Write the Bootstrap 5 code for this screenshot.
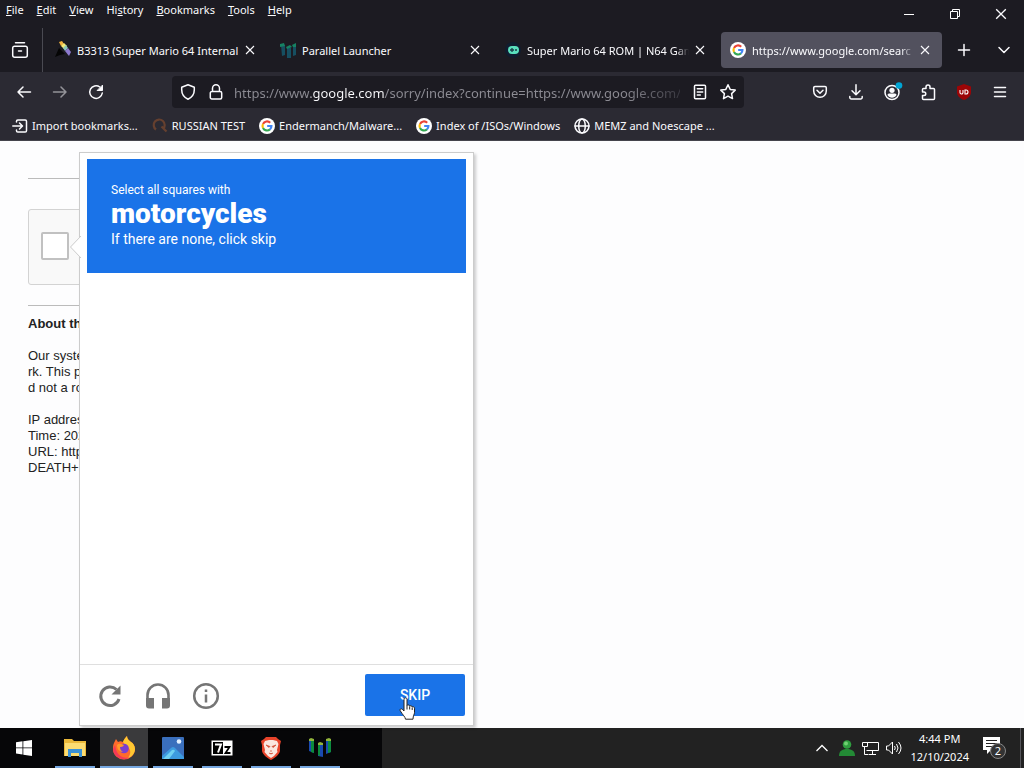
<!DOCTYPE html>
<html lang="en">
<head>
<meta charset="utf-8">
<meta name="viewport" content="width=device-width, initial-scale=1">
<title>https://www.google.com/search</title>
<link href="https://cdn.jsdelivr.net/npm/bootstrap@5.3.0/dist/css/bootstrap.min.css" rel="stylesheet">
<style>
  body { font-family: "Noto Sans", "Open Sans", sans-serif; font-size: 11px; line-height: 16px; background: #fdfdfe; }
  button, input { font: inherit; color: inherit; }
  .plain { background: none; border: 0; padding: 0; color: inherit; display: flex; align-items: center; justify-content: center; }
  svg { display: block; flex: none; overflow: visible; }
  .ln { fill: none; stroke: currentColor; stroke-width: 1.5; stroke-linecap: round; stroke-linejoin: round; }
  .chrome { background: #1c1b22; color: #fbfbfe; }
  .menus { padding: 2px 0 0 6px; gap: 13px; height: 28px; }
  .menus .plain { height: 16px; }
  .winbtn { width: 46px; height: 28px; }
  .tabstrip { height: 44px; padding-right: 2px; }
  .history-btn { width: 43px; border-right: 1px solid #4a4a52 !important; padding-right: 3px; }
  .tabs { gap: 4px; margin-left: 3px; }
  .tab-item { flex: 1 1 0; min-width: 0; max-width: 221px; height: 36px; border-radius: 4px; padding: 0 12px 0 9px; gap: 6px; }
  .tab-item.current { background: #52515e; }
  .tab-name { flex: 1 1 0; min-width: 0; padding-top: 2px; white-space: nowrap; }
  .fade-end { -webkit-mask-image: linear-gradient(90deg, #000 92%, transparent); mask-image: linear-gradient(90deg, #000 92%, transparent); }
  .tools { background: #2b2a33; color: #fbfbfe; }
  .toolrow { height: 40px; padding: 0 6px; }
  .tool { width: 36px; height: 36px; }
  .urlbar { height: 32px; margin: 0 58px; background: #1c1b22; border-radius: 4px; padding: 0 8px; gap: 12px; }
  .url { flex: 1; min-width: 0; border: 0; outline: 0; padding: 2px 0 0; margin-left: -2px; font-size: 13px; height: 24px; color: transparent;
    background: linear-gradient(90deg, #8d8c94 0 77px, #fbfbfe 77px 150px, #8d8c94 150px 390px, #35343c 448px);
    -webkit-background-clip: text; background-clip: text; }
  .marks { height: 29px; padding: 0 12px; gap: 14px; border-bottom: 1px solid #45444c; }
  .marks a { color: inherit; text-decoration: none; gap: 4px; white-space: nowrap; }
  .site { font: 13px/16px "Liberation Sans", Arial, sans-serif; color: #222; }
  .notice { padding: 37px 0 0 28px; width: 428px; }
  .notice hr { margin: 0; border-color: #bbb; opacity: 1; }
  .anchor-box { width: 304px; height: 76px; margin: 30px 0 20px; border: 1px solid #d3d3d3; border-radius: 3px; background: #f9f9f9; padding: 0 0 2px 12px; }
  .anchor-box input { appearance: none; width: 28px; height: 28px; margin: 0; border: 2px solid #c1c1c1; border-radius: 2px; background: #fff; }
  .notice p { margin: 0 0 16px; white-space: nowrap; }
  .notice .about { margin-top: 10px; }
  .challenge { position: absolute; left: 79px; top: 11px; bottom: 2px; width: 395px; background: #fff; border: 1px solid #ccc; box-shadow: 2px 2px 3px rgba(0,0,0,.2); font-family: Roboto, sans-serif; }
  .pointer { position: absolute; left: -10px; top: 83px; }
  .prompt { margin: 6px 7px 0; height: 114px; padding: 23px 24px; background: #1a73e8; color: #fff; }
  .prompt .sm { font-size: 12px; line-height: 16px; }
  .prompt .md { font-size: 14px; line-height: 18px; }
  .prompt h1 { font-size: 28px; line-height: 32px; font-weight: 900; margin: 0; }
  .foot { border-top: 1px solid #dfdfdf; padding: 9px 8px 9px 15px; color: #757575; height: 61px; }
  .foot .ico { width: 30px; height: 42px; margin-right: 18px; padding-top: 2px; }
  .skip { width: 100px; height: 42px; border-radius: 2px; background: #1a73e8; color: #fff; border: 0; font-size: 14px; font-weight: 500; }
  .hand { position: absolute; left: 34px; top: 23px; }
  .taskbar { height: 40px; background: #222; color: #fff; }
  .pinned { background: #060608; width: 382px; gap: 1px; }
  .start { width: 50px; padding-right: 2px; }
  .app { width: 48px; position: relative; }
  .app::after { content: ""; position: absolute; left: 4px; right: 4px; bottom: 0; height: 2px; background: #76a7e0; }
  .app.active { background: #3a3a3c; }
  .app.active::after { left: 0; right: 0; }
  .tray { gap: 7px; padding-right: 3px; }
  .clock { line-height: 18px; text-align: center; margin: 0 7px 0 1px; }
  .peek { width: 1px; background: #55555a; height: 40px; margin-left: 6px; }
</style>
</head>
<body class="d-flex flex-column min-vh-100">
<svg width="0" height="0" class="position-absolute">
  <symbol id="g" viewBox="0 0 18 18">
    <circle cx="9" cy="9" r="9" fill="#fff"/>
    <path fill="none" stroke="#ea4335" stroke-width="2.4" d="M4.5 6.8A5 5 0 0 1 12.6 5.3"/>
    <path fill="none" stroke="#fbbc05" stroke-width="2.4" d="M4.5 6.8A5 5 0 0 0 4.5 11.2"/>
    <path fill="none" stroke="#34a853" stroke-width="2.4" d="M4.5 11.2A5 5 0 0 0 12.3 12.8"/>
    <path fill="none" stroke="#4285f4" stroke-width="2.4" d="M12.3 12.8A5 5 0 0 0 14 9H9.2"/>
  </symbol>
  <symbol id="x" viewBox="0 0 10 10"><path d="M1 1l8 8M9 1L1 9" fill="none" stroke="currentColor" stroke-width="1.1"/></symbol>
  <symbol id="pillars" viewBox="0 0 24 22">
    <path fill="#1a49b0" d="M1 3h5v13l-5-2zM10 7h5v13l-5-1zM18 3h5v12l-5 2z"/>
    <path fill="#0c8a3e" d="M3 4h3v12l-3-1zM10 7h2v12l-2-1zM20 4h3v11l-3 1z"/>
    <path fill="#93b53b" d="M1 2l2-1 3 1v2H1zM10 6l2-1 3 1v2h-5zM18 2l3-1 2 1v2h-5z"/>
  </symbol>
</svg>

<header class="chrome">
  <div class="d-flex justify-content-between">
    <nav class="menus d-flex" aria-label="Menu bar">
      <button class="plain"><span><u>F</u>ile</span></button>
      <button class="plain"><span><u>E</u>dit</span></button>
      <button class="plain"><span><u>V</u>iew</span></button>
      <button class="plain"><span>Hi<u>s</u>tory</span></button>
      <button class="plain"><span><u>B</u>ookmarks</span></button>
      <button class="plain"><span><u>T</u>ools</span></button>
      <button class="plain"><span><u>H</u>elp</span></button>
    </nav>
    <div class="d-flex">
      <button class="plain winbtn" aria-label="Minimize"><svg width="10" height="10"><path d="M0 5.500h10" stroke="#fff"/></svg></button>
      <button class="plain winbtn" aria-label="Restore"><svg width="10" height="10" fill="none" stroke="#fff"><path d="M.5 2.500h7v7h-7zM2.500 2.500v-2h7v7h-2"/></svg></button>
      <button class="plain winbtn" aria-label="Close"><svg width="12" height="12"><use href="#x"/></svg></button>
    </div>
  </div>
  <div class="tabstrip d-flex align-items-center">
    <button class="plain history-btn h-100" aria-label="View recent browsing">
      <svg class="ln" width="16" height="16"><path d="M3.500 .8h9M2.500 4.300h11a1.800 1.800 0 0 1 1.800 1.800v7.100a2 2 0 0 1-2 2H2.700a2 2 0 0 1-2-2V6.100a1.800 1.800 0 0 1 1.800-1.800zM6.500 9h3"/></svg>
    </button>
    <div class="tabs d-flex flex-grow-1" role="tablist">
      <div class="tab-item d-flex align-items-center" role="tab">
        <svg width="16" height="16"><path d="M0 15L4 6l6 6-5 1z" fill="#050505"/><path d="M4 0l3-1 2 3-3 2z" fill="#f3b33d"/><path d="M6 4l3-3 3 3-3 3z" fill="#f4ea77"/><path d="M8 6l3-3 2 3-3 3z" fill="#8cc8b8"/><path d="M10 9l3-3 3 4-2 4z" fill="#8d7ad0"/></svg>
        <span class="tab-name">B3313 (Super Mario 64 Internal</span>
        <button class="plain" aria-label="Close tab"><svg width="10" height="10"><use href="#x"/></svg></button>
      </div>
      <div class="tab-item d-flex align-items-center" role="tab">
        <svg width="16" height="15"><path fill="#164f61" d="M1 2h4v10l-3 1zM7 5h4v10H7zM13 3h3v9l-3 1z"/><path fill="#168263" d="M0 1l4-1 1 3-5 1zM6 4l4-2 2 2-5 2zM12 2l4-2v4h-3z"/></svg>
        <span class="tab-name">Parallel Launcher</span>
        <button class="plain" aria-label="Close tab"><svg width="10" height="10"><use href="#x"/></svg></button>
      </div>
      <div class="tab-item d-flex align-items-center" role="tab">
        <svg width="16" height="16"><circle cx="8" cy="8" r="8" fill="#111d30"/><rect x="3" y="4" width="11" height="8" rx="4" fill="#5ae0bd"/><path d="M5 8h4M7 6v4" stroke="#183c4a" stroke-width="1.300"/><circle cx="11" cy="8" r="1" fill="#183c4a"/></svg>
        <span class="tab-name fade-end">Super Mario 64 ROM | N64 Gam</span>
        <button class="plain" aria-label="Close tab"><svg width="10" height="10"><use href="#x"/></svg></button>
      </div>
      <div class="tab-item current d-flex align-items-center" role="tab" aria-selected="true">
        <svg width="16" height="16"><use href="#g"/></svg>
        <span class="tab-name fade-end">https://www.google.com/searc</span>
        <button class="plain" aria-label="Close tab"><svg width="10" height="10"><use href="#x"/></svg></button>
      </div>
    </div>
    <button class="plain tool ms-1" aria-label="New tab"><svg class="ln" width="12" height="12"><path d="M6 .5v11M.5 6h11"/></svg></button>
    <button class="plain tool ms-1" aria-label="List all tabs"><svg class="ln" width="12" height="8"><path d="M1 1.500l5 5 5-5"/></svg></button>
  </div>
</header>

<section class="tools">
  <div class="toolrow d-flex align-items-center">
    <button class="plain tool" aria-label="Back"><svg class="ln" width="14" height="12"><path d="M13.500 6H1M6 1L1 6l5 5"/></svg></button>
    <button class="plain tool opacity-50" aria-label="Forward"><svg class="ln" width="14" height="12"><path d="M.5 6H13M8 1l5 5-5 5"/></svg></button>
    <button class="plain tool" aria-label="Reload"><svg class="ln" width="14" height="14"><path d="M10.800 2A6.300 6.300 0 1 0 13.300 8"/><path d="M13.500 .5v5h-5z" fill="currentColor" stroke-width="1"/></svg></button>
    <div class="urlbar d-flex align-items-center flex-grow-1">
      <svg class="ln" width="16" height="16"><path d="M8 .8l6.300 2.400v2.600c0 4-2 7.400-6.300 9.400C3.700 13.200 1.700 9.800 1.700 5.800V3.200z"/></svg>
      <svg class="ln" width="16" height="16"><path d="M3.800 7.500h8.400a1.500 1.500 0 0 1 1.500 1.500v4.500a1.500 1.500 0 0 1-1.500 1.500H3.800a1.500 1.500 0 0 1-1.500-1.500V9a1.500 1.500 0 0 1 1.500-1.500zM4.500 7.500V4.200a3.500 3.500 0 0 1 7 0v3.300"/></svg>
      <input class="url" type="text" aria-label="Address" value="https://www.google.com/sorry/index?continue=https://www.google.com/">
      <button class="plain" aria-label="Reader view"><svg class="ln" width="16" height="16"><path d="M3.500 1.300h9a1 1 0 0 1 1 1v11.400a1 1 0 0 1-1 1h-9a1 1 0 0 1-1-1V2.300a1 1 0 0 1 1-1zM5.300 4.800h5.400M5.300 8h5.400M5.300 11h3"/></svg></button>
      <button class="plain" aria-label="Bookmark this page"><svg class="ln" width="16" height="16"><path d="M8 .8l2.200 4.600 5 .7-3.600 3.500.9 5L8 12.200l-4.500 2.400.9-5L.8 6.100l5-.7z"/></svg></button>
    </div>
    <button class="plain tool" aria-label="Save to Pocket"><svg class="ln" width="14" height="14"><path d="M2 1.500h10a1.300 1.300 0 0 1 1.300 1.300V6a6.300 6.300 0 0 1-12.600 0V2.800A1.300 1.300 0 0 1 2 1.500zM4 5.300l3 3 3-3"/></svg></button>
    <button class="plain tool" aria-label="Downloads"><svg class="ln" width="14" height="16"><path d="M7 .8v9.700M3 6.800l4 4 4-4M.8 12.500v1a1.500 1.500 0 0 0 1.500 1.500h9.400a1.500 1.500 0 0 0 1.500-1.500v-1"/></svg></button>
    <button class="plain tool" aria-label="Account"><svg width="16" height="16"><circle class="ln" cx="8" cy="8.500" r="7"/><circle cx="8" cy="6.300" r="2.600" fill="#fbfbfe"/><path d="M3.500 11c0-1 1-1.500 2-1.500h5c1 0 2 .5 2 1.500-1 2-2.700 2.700-4.500 2.700S4.500 13 3.500 11z" fill="#fbfbfe"/><circle cx="15" cy="1.500" r="3.300" fill="#00a5d5"/></svg></button>
    <button class="plain tool" aria-label="Extensions"><svg class="ln" width="16" height="16"><path d="M6 4.500V3a2 2 0 0 1 4 0v1.500h3.500a1 1 0 0 1 1 1v9a1 1 0 0 1-1 1h-10a1 1 0 0 1-1-1v-3H4a1.700 1.700 0 0 0 0-3.500H2.500V5.500a1 1 0 0 1 1-1z"/></svg></button>
    <button class="plain tool" aria-label="uBlock Origin"><svg width="16" height="16"><path d="M8 0l7 2.500V8c0 4-3 6.500-7 8-4-1.500-7-4-7-8V2.500z" fill="#9c0507"/><path d="M4 6v2.500a1 1 0 0 0 3 0V6M9 6v4h1a2 2 0 0 0 0-4z" fill="none" stroke="#fff" stroke-width="1.100"/></svg></button>
    <button class="plain tool" aria-label="Application menu"><svg class="ln" width="12" height="12"><path d="M.5 1.500h11M.5 6h11M.5 10.500h11"/></svg></button>
  </div>
  <nav class="marks d-flex align-items-center" aria-label="Bookmarks">
    <a href="#" class="d-flex align-items-center"><svg class="ln" width="16" height="16"><path d="M4.500 4V3.300A1.300 1.300 0 0 1 5.800 2h7.400a1.300 1.300 0 0 1 1.300 1.300v9.400a1.300 1.300 0 0 1-1.300 1.300H5.800a1.300 1.300 0 0 1-1.300-1.300V12M.8 8h9.500M7.500 5l3 3-3 3"/></svg>Import bookmarks...</a>
    <a href="#" class="d-flex align-items-center"><svg width="16" height="16"><path d="M4 11.500A5.500 5.500 0 1 1 11 11M9.500 8.500l5 5" fill="none" stroke="#66402f" stroke-width="2.200"/></svg>RUSSIAN TEST</a>
    <a href="#" class="d-flex align-items-center"><svg width="16" height="16"><use href="#g"/></svg>Endermanch/Malware...</a>
    <a href="#" class="d-flex align-items-center"><svg width="16" height="16"><use href="#g"/></svg>Index of /ISOs/Windows</a>
    <a href="#" class="d-flex align-items-center"><svg class="ln" width="16" height="16"><circle cx="8" cy="8" r="7"/><ellipse cx="8" cy="8" rx="3.300" ry="7"/><path d="M1 8h14"/></svg>MEMZ and Noescape ...</a>
  </nav>
</section>

<main class="site position-relative flex-grow-1">
  <div class="notice">
    <hr>
    <div class="anchor-box d-flex align-items-center"><input type="checkbox" aria-label="I'm not a robot"></div>
    <hr>
    <p class="about"><b>About this page</b></p>
    <p>Our systems have detected<br>rk. This page checks<br>d not a robot.</p>
    <p>IP address:<br>Time: 2024-12-10<br>URL: https://www.google.com<br>DEATH+</p>
  </div>
  <section class="challenge d-flex flex-column">
    <svg class="pointer" width="11" height="22"><path d="M11 0L.5 11 11 22" fill="#fff" stroke="#ccc"/></svg>
    <div class="prompt">
      <div class="sm">Select all squares with</div>
      <h1>motorcycles</h1>
      <div class="md">If there are none, click skip</div>
    </div>
    <div class="flex-grow-1"></div>
    <div class="foot d-flex align-items-center">
      <button class="plain ico" aria-label="Get a new challenge"><svg width="22" height="22" fill="none" stroke="currentColor" stroke-width="3"><path d="M17.500 4.500A9.300 9.300 0 1 0 20 14"/><path d="M21.500 .5v9h-9z" fill="currentColor" stroke="none"/></svg></button>
      <button class="plain ico" aria-label="Get an audio challenge"><svg width="24" height="26"><path d="M1.500 20v-8a10.500 10.500 0 0 1 21 0v8" fill="none" stroke="currentColor" stroke-width="2.600"/><path d="M0 15h8v10.500H3a3 3 0 0 1-3-3zM16 15h8v7.500a3 3 0 0 1-3 3h-5z" fill="currentColor"/></svg></button>
      <button class="plain ico" aria-label="Help"><svg width="26" height="26"><circle cx="13" cy="13" r="11.800" fill="none" stroke="currentColor" stroke-width="2.500"/><path d="M13 11.500v8M13 6.500v2.600" stroke="currentColor" stroke-width="2.500"/></svg></button>
      <div class="ms-auto position-relative">
        <button class="skip">SKIP</button>
        <svg class="hand" width="17" height="24"><path d="M5 2.500C5 .3 8 .3 8 2.500v6c.3-1 2.500-.8 2.700.7.500-.8 2.300-.6 2.500.8.700-.6 2.300-.3 2.300 1.200v4.500c0 1.500-1.500 3-1.500 6.500H6.500c0-2-3-4.500-5.300-8.500-.8-1.400 1-2.600 2.200-1.300L5 14z" fill="#fff" stroke="#222" stroke-linejoin="round"/><path d="M8 8.500v4M10.700 9.500v3M13.200 10.500v2.500" stroke="#222"/></svg>
      </div>
    </div>
  </section>
</main>

<footer class="taskbar d-flex justify-content-between">
  <div class="pinned d-flex">
    <button class="plain start" aria-label="Start"><svg width="16" height="16" fill="#fff"><path d="M0 2.300l6.500-1v6.200H0zM7.300 1.200L16 0v7.500H7.300zM0 8.300h6.500v6.200l-6.500-1zM7.300 8.300H16V16l-8.700-1.300z"/></svg></button>
    <button class="plain app" aria-label="File Explorer"><svg width="22" height="20"><path d="M0 1h8l2 2h12v15H0z" fill="#eab83a"/><path d="M1 5h20v13H1z" fill="#fbdc72"/><path d="M4 19v-8h14v8h-3v-4H7v4z" fill="#3a91d6"/></svg></button>
    <button class="plain app active" aria-label="Firefox"><svg width="24" height="24"><path d="M2 7l2-4 2 3c2-1 3-1 5 0 1-3 3-5 4-6 0 3 2 4 4 6 2 1 4 4 4 7a11 10.500 0 0 1-22 0c0-2 0-4 1-6z" fill="#ff6b2b"/><path d="M15 0c0 3 2 4 4 6 2 1 4 4 4 7 0 4-3 8-7 9 3-4 3-8 0-11-3-2-4-4-5-5 1-3 3-5 4-6z" fill="#ffc832"/><path d="M1 13a11 10.500 0 0 0 17 8.500c-6 1-12-1-14-8L3 9z" fill="#f33a58"/><circle cx="12" cy="12.500" r="4.800" fill="#7b3fd0"/><path d="M5 9c2-2 4-1 7 0-1 2-3 2-4 2 0 2 1 4 3 5-4 0-6-3-6-7z" fill="#ff9a29"/></svg></button>
    <button class="plain app" aria-label="Photos"><svg width="22" height="22"><rect width="22" height="22" rx="1" fill="#3a6fbd"/><path d="M0 19l9-8q2-2 4 0l9 9v2H0z" fill="#3d9be0"/><path d="M1 22l9-9q2-1 3 1l-6 8z" fill="#6fd0f2"/><circle cx="17" cy="4.500" r="2.300" fill="#e3f0ff"/></svg></button>
    <button class="plain app" aria-label="7-Zip"><svg width="22" height="16"><path d="M.5 .5h21v15H.5z" fill="#fff"/><path d="M2 2h10v12H2z" fill="#000"/><path d="M4 4.500h6l-3 8" fill="none" stroke="#fff" stroke-width="2"/><path d="M13.500 7h5l-4 6h5" fill="none" stroke="#000" stroke-width="1.800"/></svg></button>
    <button class="plain app" aria-label="Brave"><svg width="20" height="23"><path d="M5 0h10l2 2 3 2-1 4 0 6c-1 4-5 7-9 9-4-2-8-5-9-9V8L0 4l3-2z" fill="#e8432a"/><path d="M4 4l4-1h4l4 1 1.500 3-1.500 6 .5 2-3.500 4-3 2-3-2L3.500 15l.5-2-1.500-6z" fill="#fbe6df"/><path d="M5 8l4 1.500-1 1zM15 8l-4 1.500 1 1zM8 16l2 1 2-1M10 13v2" fill="#c8452f" stroke="#d4563d" stroke-width=".8"/></svg></button>
    <button class="plain app" aria-label="Parallel Launcher"><svg width="24" height="22"><use href="#pillars"/></svg></button>
  </div>
  <div class="tray d-flex align-items-center">
    <button class="plain" aria-label="Show hidden icons"><svg width="12" height="8"><path d="M.5 7L6 1.500 11.500 7" fill="none" stroke="#fff" stroke-width="1.300"/></svg></button>
    <svg class="ms-1" width="16" height="16"><circle cx="8" cy="4.500" r="4.300" fill="#2f9e3f"/><path d="M0 16c0-5 3-7 8-7s8 2 8 7z" fill="#238a35"/><circle cx="7" cy="3.500" r="2" fill="#70cf72"/></svg>
    <svg width="17" height="15" fill="none" stroke="#fff"><path d="M4.500 1.500h12v8h-12M10.500 9.500v4M7 13.500h7M.5 1.500h5v4h-5zM2.500 5.500v8h4"/></svg>
    <svg width="16" height="14" fill="none" stroke="#fff"><path d="M.5 5h2l4-4v12l-4-4h-2zM8.500 5q1.500 2 0 4M10.500 3q3 4 0 8M12.500 1q5 6 0 12"/></svg>
    <div class="clock">4:44 PM<br>12/10/2024</div>
    <button class="plain position-relative" aria-label="Notifications, 2 new"><svg width="24" height="24"><path d="M0 1h17v13H8l-4 4v-4H0z" fill="#fff"/><path d="M3 4.500h11M3 7.500h11M3 10.500h7" stroke="#222"/><circle cx="15" cy="15" r="7.500" fill="#333" stroke="#888"/><text x="15" y="19" font-size="11" text-anchor="middle" fill="#fff">2</text></svg></button>
    <div class="peek"></div>
  </div>
</footer>
<script src="https://cdn.jsdelivr.net/npm/bootstrap@5.3.0/dist/js/bootstrap.bundle.min.js"></script>
</body>
</html>
